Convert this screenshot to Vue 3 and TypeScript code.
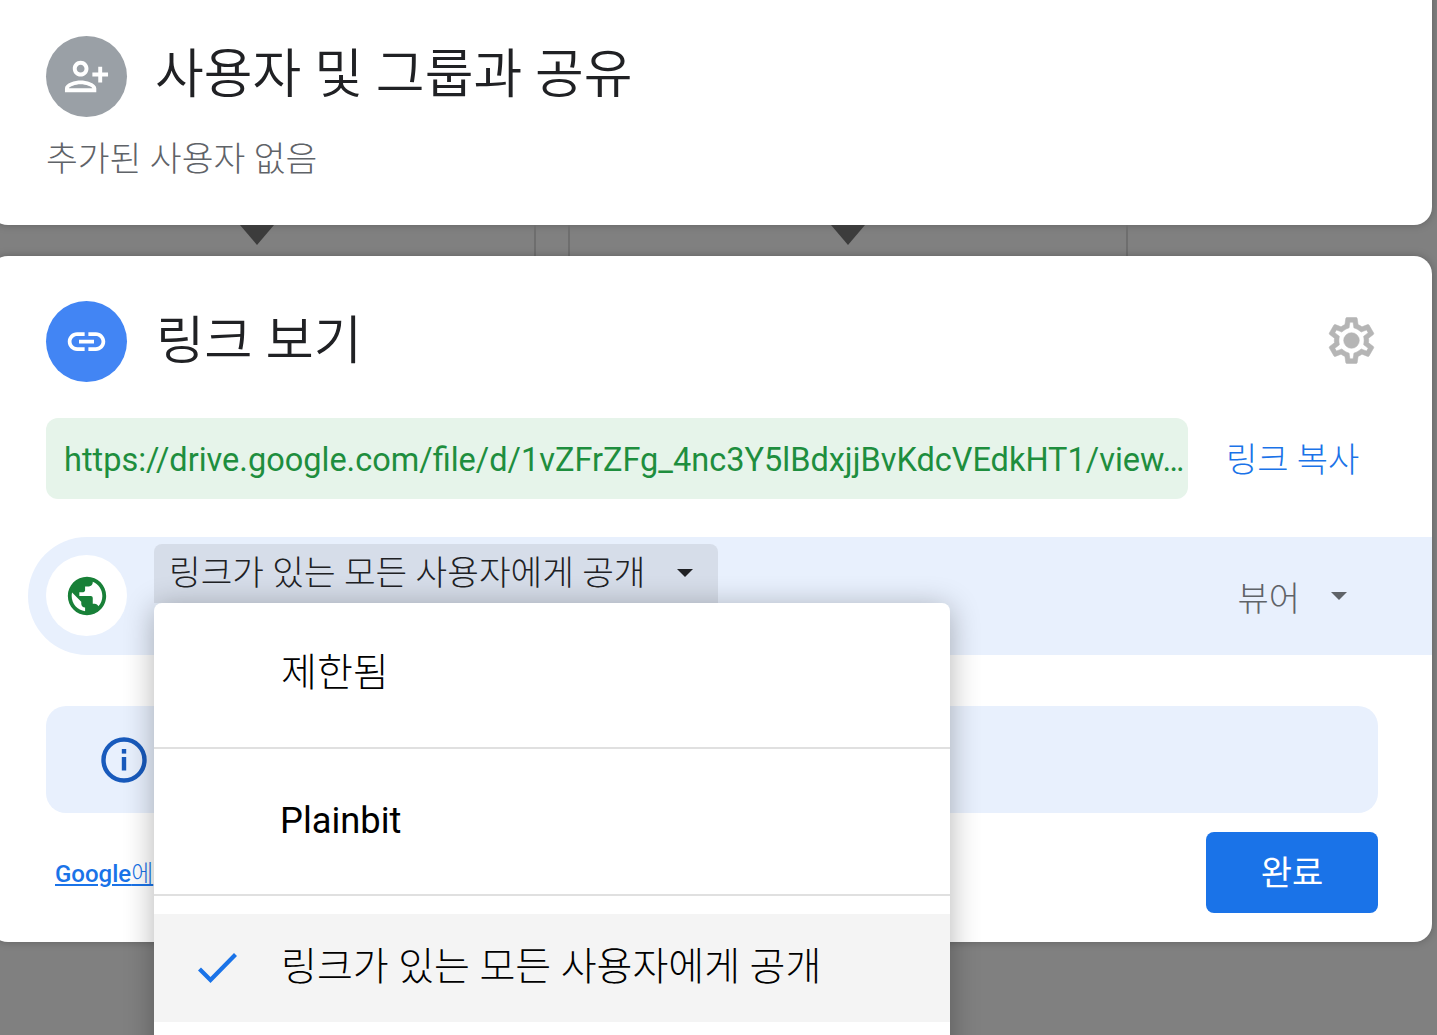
<script setup lang="ts">
const options = [
  { label: '제한됨', selected: false, latin: false, lift: 'lift-lg' },
  { label: 'Plainbit', selected: false, latin: true, lift: 'lift-sm' },
  { label: '링크가 있는 모든 사용자에게 공개', selected: true, latin: false, lift: 'lift-md' },
];
const url = 'https://drive.google.com/file/d/1vZFrZFg_4nc3Y5lBdxjjBvKdcVEdkHT1/view…';
</script>

<template>
  <div class="page">
    <section class="card card-people">
      <header class="head">
        <span class="avatar avatar-grey">
          <svg width="47" height="47" viewBox="0 0 24 24" fill="#fff">
            <path d="M13 8c0-2.21-1.79-4-4-4S5 5.79 5 8s1.79 4 4 4 4-1.79 4-4zm-2 0c0 1.1-.9 2-2 2s-2-.9-2-2 .9-2 2-2 2 .9 2 2zM1 18v2h16v-2c0-2.66-5.33-4-8-4s-8 1.34-8 4zm2 0c.2-.71 3.3-2 6-2 2.69 0 5.77 1.28 6 2H3zm17-3v-3h3v-2h-3V7h-2v3h-3v2h3v3h2z" />
          </svg>
        </span>
        <h1 class="title">사용자 및 그룹과 공유</h1>
      </header>
      <p class="empty">추가된 사용자 없음</p>
    </section>

    <div class="gap">
      <i class="tri tri-a"></i>
      <i class="tri tri-b"></i>
      <i class="rule rule-a"></i>
      <i class="rule rule-b"></i>
      <i class="rule rule-c"></i>
    </div>

    <section class="card card-link">
      <header class="head">
        <span class="avatar avatar-blue">
          <svg width="45" height="45" viewBox="0 0 24 24" fill="#fff">
            <path d="M17 7h-4v2h4c1.65 0 3 1.35 3 3s-1.35 3-3 3h-4v2h4c2.76 0 5-2.24 5-5s-2.24-5-5-5zm-6 8H7c-1.65 0-3-1.35-3-3s1.35-3 3-3h4V7H7c-2.76 0-5 2.24-5 5s2.24 5 5 5h4v-2zm-3-4h8v2H8z" />
          </svg>
        </span>
        <h1 class="title title-link">링크 보기</h1>
        <svg class="gear" width="55" height="55" viewBox="0 0 24 24" fill="#b5b5b5" stroke="#b5b5b5" stroke-width="0.25">
          <path fill-rule="evenodd" d="M19.43 12.98c.04-.32.07-.64.07-.98 0-.34-.03-.66-.07-.98l2.11-1.65c.19-.15.24-.42.12-.64l-2-3.46c-.09-.16-.26-.25-.44-.25-.06 0-.12.01-.17.03l-2.49 1c-.52-.4-1.08-.73-1.69-.98l-.38-2.65C14.46 2.18 14.25 2 14 2h-4c-.25 0-.46.18-.49.42l-.38 2.65c-.61.25-1.17.59-1.69.98l-2.49-1c-.06-.02-.12-.03-.18-.03-.17 0-.34.09-.43.25l-2 3.46c-.13.22-.07.49.12.64l2.11 1.65c-.04.32-.07.65-.07.98 0 .33.03.66.07.98l-2.11 1.65c-.19.15-.24.42-.12.64l2 3.46c.09.16.26.25.44.25.06 0 .12-.01.17-.03l2.49-1c.52.4 1.08.73 1.69.98l.38 2.65c.03.24.24.42.49.42h4c.25 0 .46-.18.49-.42l.38-2.65c.61-.25 1.17-.59 1.69-.98l2.49 1c.06.02.12.03.18.03.17 0 .34-.09.43-.25l2-3.46c.12-.22.07-.49-.12-.64l-2.11-1.65zm-1.98-1.71c.04.31.05.52.05.73 0 .21-.02.43-.05.73l-.14 1.13.89.7 1.08.84-.7 1.21-1.27-.51-1.04-.42-.9.68c-.43.32-.84.56-1.25.73l-1.06.43-.16 1.13-.2 1.35h-1.4l-.19-1.35-.16-1.13-1.06-.43c-.43-.18-.83-.41-1.23-.71l-.91-.7-1.06.43-1.27.51-.7-1.21 1.08-.84.89-.7-.14-1.13c-.03-.31-.05-.54-.05-.74s.02-.43.05-.73l.14-1.13-.89-.7-1.08-.84.7-1.21 1.27.51 1.04.42.9-.68c.43-.32.84-.56 1.25-.73l1.06-.43.16-1.13.2-1.35h1.39l.19 1.35.16 1.13 1.06.43c.43.18.83.41 1.23.71l.91.7 1.06-.43 1.27-.51.7 1.21-1.07.85-.89.7.14 1.13z" />
          <circle cx="12" cy="12" r="3.4" />
        </svg>
      </header>

      <div class="url-row">
        <div class="url">{{ url }}</div>
        <a class="copy">링크 복사</a>
      </div>

      <div class="access">
        <span class="avatar avatar-white">
          <svg width="46" height="46" viewBox="0 0 24 24" fill="#188038">
            <path d="M12 2C6.48 2 2 6.48 2 12s4.48 10 10 10 10-4.48 10-10S17.52 2 12 2zm-1 17.93c-3.95-.49-7-3.85-7-7.93 0-.62.08-1.21.21-1.79L9 15v1c0 1.1.9 2 2 2v1.93zm6.9-2.54c-.26-.81-1-1.39-1.9-1.39h-1v-3c0-.55-.45-1-1-1H8v-2h2c.55 0 1-.45 1-1V7h2c1.1 0 2-.9 2-2v-.41c2.93 1.19 5 4.06 5 7.41 0 2.08-.8 3.97-2.1 5.39z" />
          </svg>
        </span>
        <button type="button" class="scope">
          <span class="scope-text">링크가 있는 모든 사용자에게 공개</span>
          <i class="caret caret-dark"></i>
        </button>
        <div class="role">
          <span>뷰어</span>
          <i class="caret"></i>
        </div>
      </div>

      <div class="info">
        <svg width="48" height="48" viewBox="0 0 48 48" fill="none">
          <circle cx="24" cy="24" r="20.5" stroke="#185abc" stroke-width="4.4" />
          <rect x="21.8" y="13" width="4.4" height="4.6" fill="#185abc" />
          <rect x="21.8" y="21" width="4.4" height="13.5" fill="#185abc" />
        </svg>
      </div>

      <footer class="foot">
        <a class="feedback">Google<span class="feedback-ko">에</span></a>
        <button type="button" class="done">완료</button>
      </footer>

      <ul class="menu">
        <li
          v-for="opt in options"
          :key="opt.label"
          class="menu-item"
          :class="[opt.lift, { selected: opt.selected, latin: opt.latin }]"
        >
          <span class="tick">
            <svg v-if="opt.selected" width="40" height="32" viewBox="0 0 40 32" fill="none">
              <path d="M1.5 17l11 11 25-25.5" stroke="#1a73e8" stroke-width="4.2" />
            </svg>
          </span>
          <span>{{ opt.label }}</span>
        </li>
      </ul>
    </section>
  </div>
</template>

<style>
html,
body {
  margin: 0;
  background: #808080;
  overflow: hidden;
}
</style>

<style scoped>
.page {
  width: 1437px;
  height: 1035px;
  overflow: hidden;
  background: #808080;
  font-family: Roboto, "Noto Sans CJK KR", sans-serif;
  color: #202124;
}

.card {
  position: relative;
  width: 1442px;
  margin-left: -10px;
  box-sizing: border-box;
  padding: 0 54px 0 56px;
  background: #fff;
  border-radius: 18px;
  box-shadow: 0 0 8px rgba(0, 0, 0, 0.25);
}

.card-people {
  margin-top: -20px;
  height: 245px;
  padding-top: 56px;
}

.card-link {
  height: 686px;
  padding-top: 45px;
}

.gap {
  position: relative;
  height: 31px;
}

.tri {
  position: absolute;
  top: 0;
  width: 0;
  height: 0;
  border-left: 17px solid transparent;
  border-right: 17px solid transparent;
  border-top: 20px solid #3c3c3c;
}

.tri-a { left: 240px; }
.tri-b { left: 831px; }

.rule {
  position: absolute;
  top: 0;
  bottom: 0;
  width: 2px;
  background: #6e6e6e;
}

.rule-a { left: 534px; }
.rule-b { left: 568px; }
.rule-c { left: 1126px; }

.head {
  display: flex;
  align-items: center;
  gap: 28px;
}

.avatar {
  flex: none;
  width: 81px;
  height: 81px;
  border-radius: 50%;
  display: flex;
  align-items: center;
  justify-content: center;
}

.avatar-grey { background: #9aa0a6; }
.avatar-blue { background: #4285f4; }
.avatar-white {
  background: #fff;
  margin-bottom: 1px;
}

.title {
  margin: 0 0 3px;
  font-size: 53px;
  font-weight: 350;
  line-height: 64px;
}

.title-link {
  margin: 0 0 1px 1px;
  font-size: 52.5px;
}

.gear {
  margin: 0 -1px 2px auto;
}

.empty {
  margin: 19px 0 0;
  font-size: 34.6px;
  font-weight: 300;
  line-height: 46px;
  color: #5f6368;
}

.url-row {
  display: flex;
  align-items: center;
  margin-top: 36px;
}

.url {
  flex: none;
  width: 1142px;
  height: 81px;
  box-sizing: border-box;
  padding-left: 18px;
  line-height: 85px;
  font-size: 32.5px;
  color: #1e8e3e;
  background: #e6f4ea;
  border-radius: 12px;
  white-space: nowrap;
}

.copy {
  margin: 0 0 2px 38px;
  font-size: 34px;
  font-weight: 300;
  color: #1a73e8;
}

.access {
  position: relative;
  display: flex;
  align-items: center;
  height: 118px;
  margin: 38px -54px 0 -18px;
  padding: 0 85px 0 18px;
  border-radius: 59px 0 0 59px;
  background: #e8f0fd;
}

.scope {
  align-self: flex-start;
  display: flex;
  align-items: center;
  justify-content: space-between;
  width: 564px;
  height: 59px;
  margin: 7px 0 0 27px;
  padding: 0 25px 0 15px;
  box-sizing: border-box;
  border: 0;
  border-radius: 8px 8px 0 0;
  background: #d6dde9;
  font: inherit;
  font-size: 34.4px;
  font-weight: 300;
  color: #202124;
}

.scope-text {
  margin-bottom: 8px;
}

.caret {
  display: block;
  width: 0;
  height: 0;
  border-left: 8.5px solid transparent;
  border-right: 8.5px solid transparent;
  border-top: 8.5px solid #5f6368;
}

.caret-dark {
  border-top-color: #202124;
  margin-bottom: 2px;
}

.role {
  margin-left: auto;
  display: flex;
  align-items: center;
  gap: 31px;
  font-size: 34px;
  font-weight: 300;
  color: #5f6368;
}

.info {
  display: flex;
  align-items: center;
  height: 107px;
  margin-top: 51px;
  padding-left: 54px;
  border-radius: 20px;
  background: #e8f0fd;
}

.foot {
  display: flex;
  align-items: center;
  justify-content: space-between;
  margin-top: 19px;
  padding-left: 9px;
}

.feedback {
  margin-bottom: 2px;
  font-size: 24px;
  font-weight: 500;
  color: #1a73e8;
  text-decoration: underline;
}

.feedback-ko {
  font-weight: 300;
}

.done {
  width: 172px;
  height: 81px;
  padding: 0 0 4px;
  border: 0;
  border-radius: 8px;
  background: #1a73e8;
  color: #fff;
  font: inherit;
  font-size: 34px;
  font-weight: 400;
}

.menu {
  position: absolute;
  top: 347px;
  left: 164px;
  width: 796px;
  height: 460px;
  margin: 0;
  padding: 0;
  list-style: none;
  background: #fff;
  border-radius: 8px;
  box-shadow: 0 4px 30px rgba(0, 0, 0, 0.3);
  color: #000;
}

.menu-item {
  display: flex;
  align-items: center;
  box-sizing: content-box;
  padding-left: 44px;
  border-bottom: 2px solid #e0e0e0;
  font-size: 39px;
  font-weight: 300;
}

.lift-lg {
  height: 132px;
  padding-bottom: 12px;
}

.lift-sm {
  height: 143px;
  padding-bottom: 2px;
}

.lift-md {
  height: 98px;
  padding-bottom: 10px;
}

.menu-item.latin {
  padding-left: 43px;
  font-size: 36.3px;
  font-weight: 400;
}

.menu-item.selected {
  margin-top: 18px;
  border-bottom: 0;
  background: #f4f4f4;
}

.tick {
  flex: none;
  width: 83px;
  display: flex;
}

.selected .tick {
  margin-top: 10px;
}
</style>
